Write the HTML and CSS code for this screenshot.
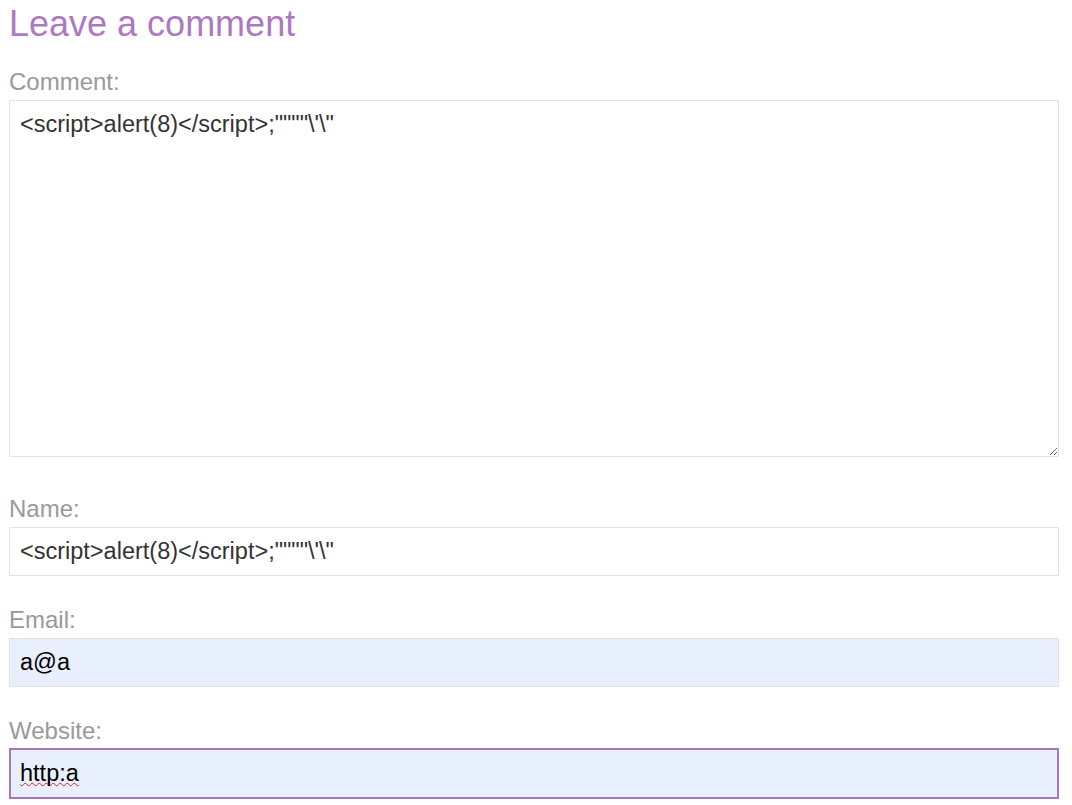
FILE: index.html
```html
<!DOCTYPE html>
<html lang="en">
<head>
<meta charset="utf-8">
<title>Leave a comment</title>
<link rel="stylesheet" href="styles.css">
</head>
<body>
<section class="comment-form">
  <h1 class="title">Leave a comment</h1>
  <form class="form">
    <label class="label" for="comment">Comment:</label>
    <textarea class="field textarea" id="comment" spellcheck="false">&lt;script&gt;alert(8)&lt;/script&gt;;""""\'\"</textarea>
    <label class="label" for="name">Name:</label>
    <input class="field input" id="name" type="text" spellcheck="false" value="&lt;script&gt;alert(8)&lt;/script&gt;;&quot;&quot;&quot;&quot;\'\&quot;">
    <label class="label" for="email">Email:</label>
    <input class="field input autofill" id="email" type="text" spellcheck="false" value="a@a">
    <label class="label" for="website">Website:</label>
    <input class="field input autofill focused" id="website" type="text" spellcheck="false" value="http:a">
  </form>
</section>
</body>
</html>
```

FILE: styles.css
```css
html, body {
  margin: 0;
  padding: 0;
  background: #ffffff;
}

body {
  font-family: "Liberation Sans", Arial, sans-serif;
}

.comment-form {
  padding: 2px 9px 0 9px;
}

.title {
  margin: 0;
  font-size: 36px;
  line-height: 44px;
  font-weight: normal;
  color: #ae78c0;
}

.form {
  display: flex;
  flex-direction: column;
  width: 1050px;
  padding-top: 21px;
}

.label {
  display: block;
  font-size: 24px;
  line-height: 30px;
  color: #999999;
  margin-bottom: 3px;
}

.field {
  box-sizing: border-box;
  width: 1050px;
  margin: 0;
  font-family: "Liberation Sans", Arial, sans-serif;
  font-size: 23.5px;
  color: #333333;
  background: #ffffff;
  border: 1px solid #e2e2e2;
  border-radius: 0;
  outline: none;
}

.textarea {
  height: 357px;
  padding: 10px 10px;
  line-height: normal;
  resize: vertical;
  margin-bottom: 37px;
}

.input {
  height: 49px;
  padding: 0 10px;
  margin-bottom: 29px;
}

.autofill {
  background: #e8f0fe;
  color: #000000;
}

.focused {
  height: 51px;
  border: 2px solid #a875bf;
  padding: 0 9px;
  margin-top: -1px;
  line-height: 40px;
  text-decoration: underline wavy #e0201c;
  text-decoration-skip-ink: none;
  text-decoration-thickness: 1px;
  text-underline-offset: 1px;
}
```
